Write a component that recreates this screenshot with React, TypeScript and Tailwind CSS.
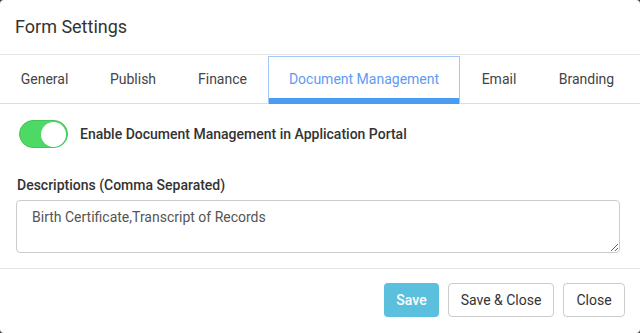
import React from 'react';

const tabs = [
  { label: 'General', w: 'w-[89px]' },
  { label: 'Publish', w: 'w-[88px]' },
  { label: 'Finance', w: 'w-[91px]' },
  { label: 'Document Management', w: 'w-[192px]' },
  { label: 'Email', w: 'w-[78px]' },
  { label: 'Branding', w: 'w-[97px]' },
];

const App: React.FC = () => {
  return (
    <div className="w-[640px] h-[333px] bg-[#3b3b3b] font-['Roboto',sans-serif]">
      <div className="h-full bg-white rounded-[4px] flex flex-col text-[#333]">
        {/* header */}
        <div className="h-[55px] px-[15px] flex items-center border-b border-[#e5e5e5]">
          <h1 className="text-[18px] leading-none text-[#333]">Form Settings</h1>
        </div>

        {/* tabs */}
        <div className="h-[49px] flex border-b border-[#dddddd]">
          {tabs.map((t) =>
            t.label === 'Document Management' ? (
              <div
                key={t.label}
                className={`relative ${t.w} flex items-center justify-center text-[14px] text-[#5e9bf3] border-t border-x border-[#a4c6f8] mt-[1px] -mb-[1px]`}
              >
                <span className="-mt-[2px]">{t.label}</span>
                <div className="absolute left-0 right-0 bottom-0 h-[6px] bg-[#4a9bf3]" />
              </div>
            ) : (
              <div key={t.label} className={`${t.w} flex items-center justify-center text-[14px] text-[#444]`}>
                <span>{t.label}</span>
              </div>
            )
          )}
        </div>

        {/* body */}
        <div className="px-[16px] pt-[16px]">
          <div className="flex items-center gap-[12px] pl-[3px]">
            <div className="w-[49px] h-[28px] rounded-full bg-[#4cd964] border border-[#46c35c] flex items-center justify-end pr-[1px]">
              <div className="w-[25px] h-[25px] rounded-full bg-white" />
            </div>
            <span className="text-[14px] font-medium text-[#333] mt-[1px]">
              Enable Document Management in Application Portal
            </span>
          </div>

          <div className="mt-[27px] text-[14px] font-medium text-[#333] pl-[1px]">
            Descriptions (Comma Separated)
          </div>
          <textarea
            className="mt-[4px] block w-[604px] h-[53px] border border-[#cccccc] rounded-[4px] px-[15px] py-[6px] text-[14px] text-[#555] resize-y outline-none font-['Roboto',sans-serif]"
            defaultValue="Birth Certificate,Transcript of Records"
          />
        </div>

        {/* footer */}
        <div className="mt-[15px] border-t border-[#e5e5e5] flex justify-end gap-[9px] px-[15px] pt-[14px]">
          <button className="h-[34px] w-[55px] rounded-[4px] bg-[#5bc0de] text-white text-[14px] font-medium">
            Save
          </button>
          <button className="h-[34px] w-[106px] rounded-[4px] bg-white border border-[#cccccc] text-[#333] text-[14px]">
            Save &amp; Close
          </button>
          <button className="h-[34px] w-[62px] rounded-[4px] bg-white border border-[#cccccc] text-[#333] text-[14px]">
            Close
          </button>
        </div>
      </div>
    </div>
  );
};

export default App;
